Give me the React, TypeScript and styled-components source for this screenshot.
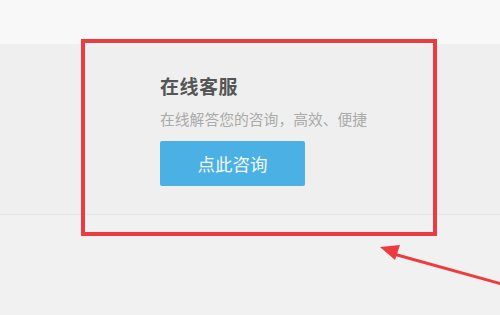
import styled, { createGlobalStyle } from 'styled-components'

const GlobalStyle = createGlobalStyle`
    html, body {
        margin: 0;
        padding: 0;
        background: #f1f1f1;
        font-family: 'Noto Sans CJK SC', 'Liberation Sans', sans-serif;
    }
`

const Page = styled.div`
    position: relative;
    width: 500px;
    height: 315px;
    overflow: hidden;
    background: #f1f1f1;
`

const TopBar = styled.div`
    height: 44px;
    background: #f8f8f8;
`

const Band = styled.section`
    display: flex;
    flex-direction: column;
    align-items: flex-start;
    height: 171px;
    box-sizing: border-box;
    padding: 29px 0 0 160px;
    background: #efefef;
    border-bottom: 1px solid #e6e6e6;
`

const Title = styled.h2`
    margin: 0;
    font-size: 19px;
    line-height: 26px;
    font-weight: 700;
    color: #555;
    letter-spacing: 0.5px;
`

const Subtitle = styled.p`
    margin: 10px 0 0;
    font-size: 14.8px;
    line-height: 20px;
    color: #aaa;
`

const ConsultButton = styled.button`
    margin-top: 12px;
    width: 145px;
    height: 45px;
    border: none;
    border-radius: 2px;
    background: #4bb0e3;
    color: #f4fbff;
    font-family: inherit;
    font-size: 17.5px;
    cursor: pointer;
`

const Highlight = styled.div`
    position: absolute;
    left: 81px;
    top: 39px;
    width: 356px;
    height: 197px;
    box-sizing: border-box;
    border: 4px solid #ee3b3f;
    pointer-events: none;
`

const Arrow = styled.svg`
    position: absolute;
    left: 370px;
    top: 236px;
    pointer-events: none;
`

export default function App() {
    return (
        <>
            <GlobalStyle />
            <Page>
                <TopBar />
                <Band>
                    <Title>在线客服</Title>
                    <Subtitle>在线解答您的咨询，高效、便捷</Subtitle>
                    <ConsultButton>点此咨询</ConsultButton>
                </Band>
                <Highlight />
                <Arrow width="130" height="60" viewBox="0 0 130 60">
                    <line x1="20" y1="17" x2="132" y2="48" stroke="#ee3b3f" strokeWidth="3" strokeLinecap="round" />
                    <polygon points="10,11 30,9 25,24" fill="#ee3b3f" />
                </Arrow>
            </Page>
        </>
    )
}
